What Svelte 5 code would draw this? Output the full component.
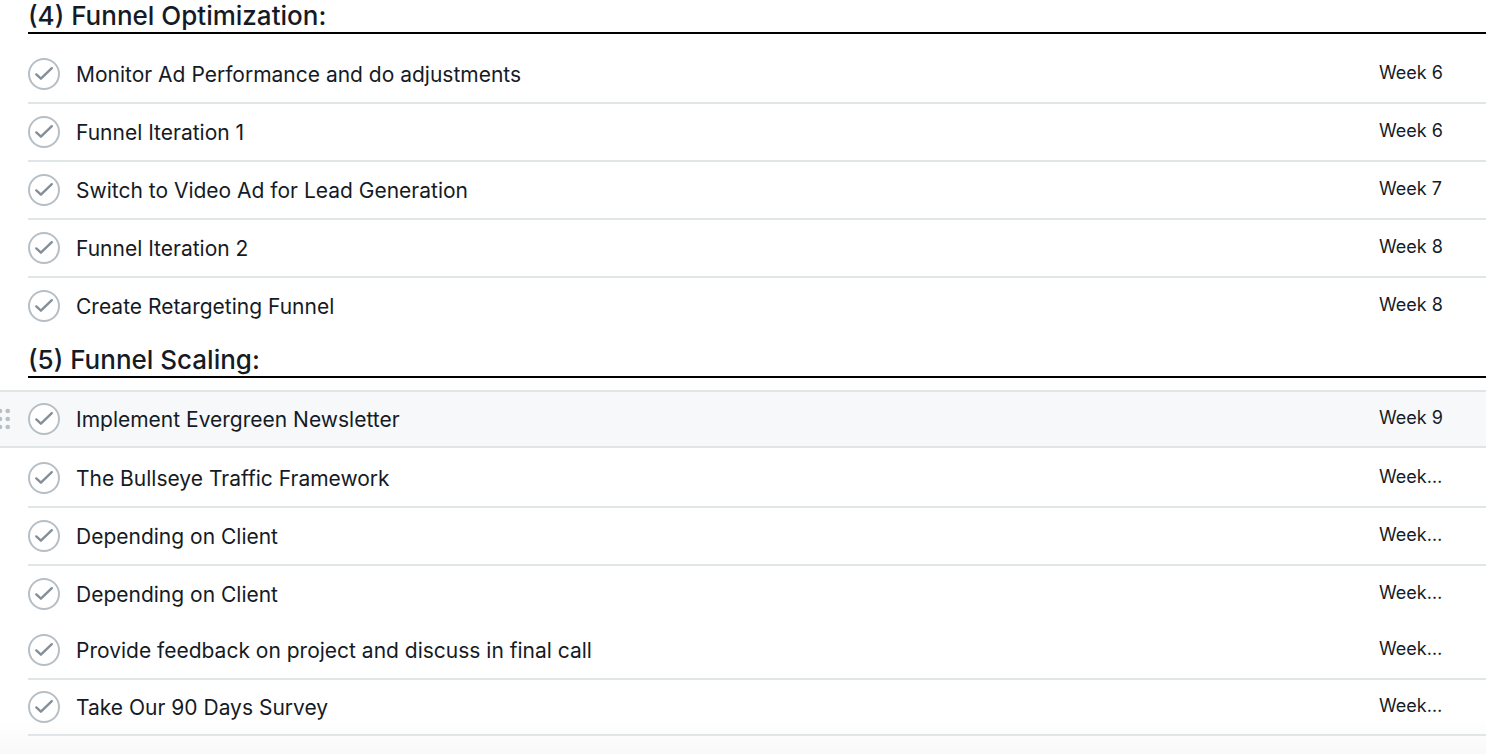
<script>
    const sections = [
        {
            id: "optimization",
            title: "(4) Funnel Optimization:",
            tasks: [
                { name: "Monitor Ad Performance and do adjustments", week: "Week 6", line: true },
                { name: "Funnel Iteration 1", week: "Week 6", line: true },
                { name: "Switch to Video Ad for Lead Generation", week: "Week 7", line: true },
                { name: "Funnel Iteration 2", week: "Week 8", line: true },
                { name: "Create Retargeting Funnel", week: "Week 8" },
            ],
        },
        {
            id: "scaling",
            title: "(5) Funnel Scaling:",
            tasks: [
                { name: "Implement Evergreen Newsletter", week: "Week 9", line: true, active: true },
                { name: "The Bullseye Traffic Framework", week: "Week…", line: true },
                { name: "Depending on Client", week: "Week…", line: true },
                { name: "Depending on Client", week: "Week…" },
                { name: "Provide feedback on project and discuss in final call", week: "Week…", line: true },
                { name: "Take Our 90 Days Survey", week: "Week…", line: true },
            ],
        },
    ];
</script>

<main class="task-list">
    {#each sections as section (section.id)}
        <section>
            <h2>{section.title}</h2>
            <ul>
                {#each section.tasks as task}
                    <li class:line={task.line} class:active={task.active}>
                        {#if task.active}
                            <svg class="handle" viewBox="0 0 12 24" aria-hidden="true">
                                <circle cx="0" cy="4" r="2.3" />
                                <circle cx="7.7" cy="4" r="2.3" />
                                <circle cx="0" cy="12" r="2.3" />
                                <circle cx="7.7" cy="12" r="2.3" />
                                <circle cx="0" cy="20" r="2.3" />
                                <circle cx="7.7" cy="20" r="2.3" />
                            </svg>
                        {/if}
                        <button type="button" class="check" aria-label={task.name}>
                            <svg viewBox="0 0 32 32">
                                <circle cx="16" cy="16" r="15" />
                                <path d="M8.3 16.4 L12.9 20.7 L23.8 10.2" />
                            </svg>
                        </button>
                        <span class="name">{task.name}</span>
                        <span class="week">{task.week}</span>
                    </li>
                {/each}
            </ul>
        </section>
    {/each}
</main>

<style>
    :global(body) {
        margin: 0;
        background: #fff;
    }

    .task-list {
        padding-bottom: 18px;
        overflow: hidden;
        background: linear-gradient(to top, #f9f9f9, #fff 36px);
        color: #151b26;
        font-family: Inter, "Liberation Sans", sans-serif;
    }

    section + section {
        margin-top: 10px;
    }

    h2 {
        margin: 0 0 12px 28px;
        border-bottom: 2px solid #000;
        font-size: 26px;
        line-height: 32px;
        font-weight: 500;
    }

    ul {
        margin: 0;
        padding: 0;
        list-style: none;
    }

    li {
        position: relative;
        display: flex;
        align-items: center;
        box-sizing: border-box;
        height: 56px;
        margin-left: 28px;
    }

    .line {
        height: 58px;
        border-bottom: 2px solid #e0e6e8;
    }

    .line:last-child {
        height: 56px;
    }

    .active {
        margin-left: 0;
        padding-left: 28px;
        border-top: 2px solid #e0e6e8;
        background: #f6f8f9;
    }

    .active + li {
        margin-top: 2px;
    }

    .handle {
        position: absolute;
        left: 0;
        width: 12px;
        height: 24px;
        fill: #b7bfc6;
    }

    .check {
        flex: none;
        width: 32px;
        height: 32px;
        margin-right: 16px;
        padding: 0;
        border: 0;
        border-radius: 50%;
        background: #fff;
        cursor: pointer;
    }

    .check svg {
        display: block;
        fill: none;
        stroke: #b7bfc6;
        stroke-width: 2;
    }

    .check path {
        stroke: #848f99;
        stroke-width: 2.4;
        stroke-linecap: round;
        stroke-linejoin: round;
    }

    .name {
        flex: 1;
        padding-top: 2px;
        font-size: 21px;
        line-height: 28px;
    }

    .week {
        width: 107px;
        padding-bottom: 2px;
        font-size: 18px;
        line-height: 24px;
        white-space: nowrap;
    }
</style>
